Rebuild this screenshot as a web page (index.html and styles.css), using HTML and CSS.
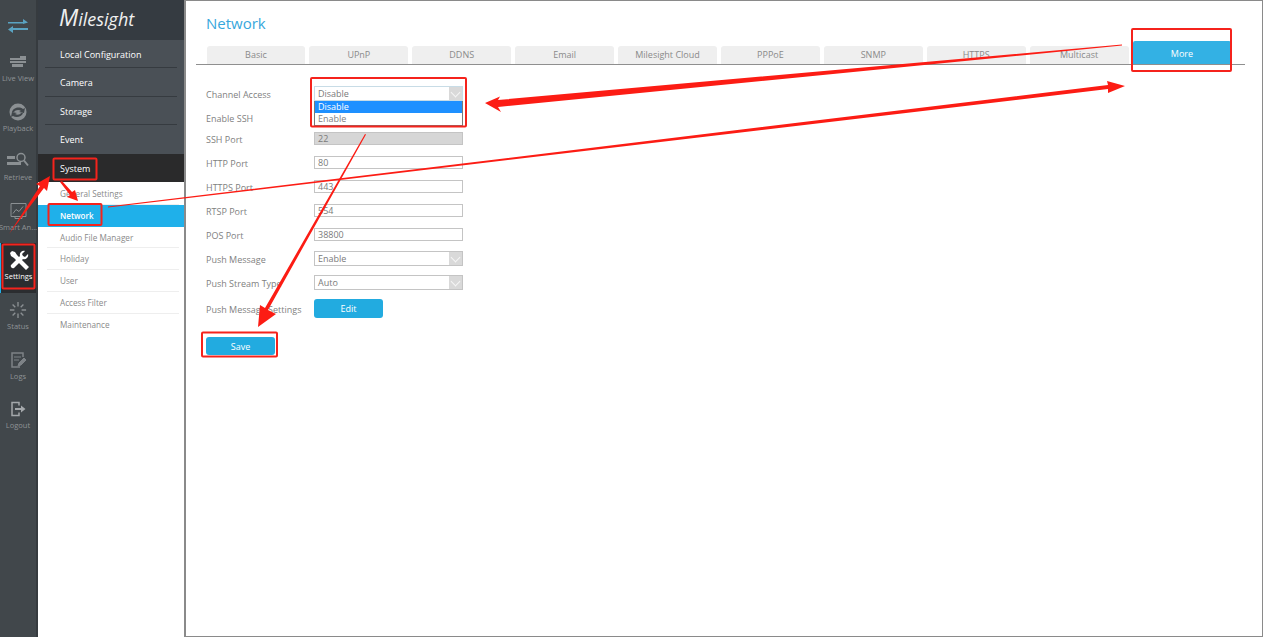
FILE: index.html
```html
<!DOCTYPE html>
<html lang="en">
<head>
    <meta charset="UTF-8">
    <title>Network</title>
    <link rel="stylesheet" href="styles.css">
</head>
<body>

<div class="app">
    <div class="rail">
        <div class="rail-top">
            <svg width="22" height="14" viewBox="0 0 22 14" fill="#5aa3c2"><path d="M1 3h15V0l5 3.500-5 1.500V4.500H1zM21 9H6V7L1 10.500 6 14v-3h15z"/></svg>
        </div>
        <div class="rail-item">
            <svg width="18" height="14" viewBox="0 0 18 14" fill="#8b9093"><path d="M1 3h10V1h6v4H1zM1 6h16v2H1zM3 9h11v3H3z"/></svg>
            <span>Live View</span>
        </div>
        <div class="rail-item">
            <svg width="18" height="18" viewBox="0 0 18 18"><circle cx="9" cy="9" r="8.500" fill="#8b9093"/><path d="M3 9c1-4 7-6 11-3l2-1-1 5-5-1 2-1c-2-2-6-1-7 1zM14 10c-1 4-7 5-10 3l-2 1 1-5 5 1-2 1c2 1 5 1 6-1z" fill="#41474b"/></svg>
            <span>Playback</span>
        </div>
        <div class="rail-item">
            <svg width="24" height="17" viewBox="0 0 24 17" fill="none" stroke="#8b9093"><path d="M1 5h8M1 11h14" stroke-width="3"/><circle cx="15" cy="5" r="4" stroke-width="1.500"/><path d="M18 8l4 5" stroke-width="2"/></svg>
            <span>Retrieve</span>
        </div>
        <div class="rail-item">
            <svg width="17" height="17" viewBox="0 0 17 17" fill="none" stroke="#8b9093"><path d="M1 1h15v13H1zM5 14v2h7v-2"/><path d="M3 11l3-4 3 2 4-5" stroke-width="1"/></svg>
            <span>Smart An...</span>
        </div>
        <div class="rail-item active">
            <svg width="20" height="20" viewBox="0 0 20 20" fill="#fff"><path d="M1 3l2-2 3 1 2 3 12 12-3 3L5 8 2 6z"/><path d="M19 4l-3 3-2-1-1-2 3-3c-3-1-6 2-5 5L2 15c-1 2 1 4 3 3l9-9c3 1 6-2 5-5z"/></svg>
            <span>Settings</span>
        </div>
        <div class="rail-item">
            <svg width="18" height="18" viewBox="0 0 20 20" stroke="#8b9093" stroke-width="1.500"><path d="M10 1v5M10 14v5M1 10h5M14 10h5M4 4l3 3M13 13l3 3M16 4l-3 3M7 13l-3 3"/></svg>
            <span>Status</span>
        </div>
        <div class="rail-item">
            <svg width="15" height="16" viewBox="0 0 15 16" fill="none" stroke="#7d8286"><path d="M12 5V1H1v14h8" stroke-width="1.500"/><path d="M3 5h7M3 8h5" stroke-width="1"/><path d="M7 14l1-3 5-5 2 2-5 5z" fill="#7d8286"/></svg>
            <span>Logs</span>
        </div>
        <div class="rail-item">
            <svg width="15" height="15" viewBox="0 0 15 15" fill="none" stroke="#a4a8ab"><path d="M8 4V1H1v13h7v-3" stroke-width="1.500"/><path d="M4 6.500h6V4l4.500 3.500L10 11V8.500H4z" fill="#a4a8ab" stroke="none"/></svg>
            <span>Logout</span>
        </div>
    </div>

    <div class="menu">
        <div class="logo"><span class="logo-m">M</span>ilesight</div>
        <ul class="menu-main">
            <li>Local Configuration</li>
            <li>Camera</li>
            <li>Storage</li>
            <li>Event</li>
            <li class="open">System</li>
        </ul>
        <ul class="menu-sub">
            <li>General Settings</li>
            <li class="current">Network</li>
            <li>Audio File Manager</li>
            <li>Holiday</li>
            <li>User</li>
            <li>Access Filter</li>
            <li>Maintenance</li>
        </ul>
    </div>

    <div class="main">
        <h1>Network</h1>
        <div class="tabs">
            <div class="tab">Basic</div>
            <div class="tab">UPnP</div>
            <div class="tab">DDNS</div>
            <div class="tab">Email</div>
            <div class="tab">Milesight Cloud</div>
            <div class="tab">PPPoE</div>
            <div class="tab">SNMP</div>
            <div class="tab">HTTPS</div>
            <div class="tab">Multicast</div>
            <div class="tab tab-more">More</div>
        </div>

        <div class="form">
            <div class="row">
                <label>Channel Access</label>
                <div class="select open"><span>Disable</span><i></i></div>
                <ul class="dropdown">
                    <li class="picked">Disable</li>
                    <li>Enable</li>
                </ul>
            </div>
            <div class="row">
                <label>Enable SSH</label>
                <div class="select"><span>Enable</span><i></i></div>
            </div>
            <div class="row row-up">
                <label>SSH Port</label>
                <div class="input disabled">22</div>
            </div>
            <div class="row">
                <label>HTTP Port</label>
                <div class="input">80</div>
            </div>
            <div class="row">
                <label>HTTPS Port</label>
                <div class="input">443</div>
            </div>
            <div class="row">
                <label>RTSP Port</label>
                <div class="input">554</div>
            </div>
            <div class="row">
                <label>POS Port</label>
                <div class="input">38800</div>
            </div>
            <div class="row">
                <label>Push Message</label>
                <div class="select"><span>Enable</span><i></i></div>
            </div>
            <div class="row">
                <label>Push Stream Type</label>
                <div class="select"><span>Auto</span><i></i></div>
            </div>
            <div class="row row-down">
                <label>Push Message Settings</label>
                <button class="btn">Edit</button>
            </div>
            <button class="btn btn-save">Save</button>
        </div>
    </div>
</div>

<!-- red markup drawn on top of the screenshot -->
<svg class="markup" width="1267" height="640" viewBox="0 0 1267 640" fill="#fc1c14">
    <g fill="none" stroke="#f5231c" stroke-width="2">
        <rect x="53.500" y="158.500" width="43" height="21" rx="1"/>
        <rect x="48.500" y="204" width="53" height="21" rx="1"/>
        <rect x="2.500" y="244.500" width="32" height="44" rx="1"/>
        <rect x="311" y="78" width="155" height="48.500" rx="1"/>
        <rect x="1132" y="29" width="99" height="42" rx="1"/>
        <rect x="202" y="332.500" width="75" height="24" rx="1"/>
    </g>
    <path d="M1122 44.500L1122 45.500L498 107L501 112L485 103L500 96.500L498 100z"/>
    <path d="M108 206.500L1108 85L1107 81L1125 86L1108 93L1108 89L108 207.500z"/>
    <path d="M365 134L366 134.500L268 310L276 314L258 327L260 305L265 308z"/>
    <path d="M9 234L40 186L36 184L50 176L47 191L44 188z"/>
    <path d="M60 182L62 181L72 192L75 190L78 201L67 197L70 195z"/>
</svg>

</body>
</html>
```

FILE: styles.css
```css
* {
    box-sizing: border-box;
}
body {
    margin: 0;
    background-color: white;
    font-family: "Open Sans", "Noto Sans", Arial, sans-serif;
    font-size: 9px;
    overflow: hidden;
}
ul {
    list-style: none;
    margin: 0;
    padding: 0;
}
.app {
    display: flex;
    width: 1263px;
    height: 637px;
}

/* left icon rail */
.rail {
    width: 38px;
    flex-shrink: 0;
    background-color: #41474b;
    border-right: 2px solid #363b3f;
    color: #8f9396;
}
.rail-top {
    height: 45px;
    padding-top: 19px;
    display: flex;
    justify-content: center;
    align-items: flex-start;
}
.rail-item {
    height: 49.6px;
    display: flex;
    flex-direction: column;
    align-items: center;
    text-align: center;
    white-space: nowrap;
    font-size: 7.500px;
    color: #8f9396;
}
.rail-item svg {
    display: block;
    height: 20px;
    margin-top: 7px;
    margin-bottom: 1px;
}
.rail-item.active {
    background-color: #2b2d30;
    border-left: 1px solid #1fb0ea;
    color: white;
}

/* second level menu */
.menu {
    width: 147px;
    flex-shrink: 0;
    border-right: 1px solid #8a8a8a;
}
.logo {
    height: 40px;
    padding: 3px 0 0 21px;
    background-color: #353b41;
    color: #f0f0f0;
    font-size: 18px;
    line-height: 28px;
    font-weight: 400;
    font-style: italic;
}
.logo-m {
    font-size: 23px;
}
.menu-main {
    background-color: #4a5056;
}
.menu-main li {
    height: 28.400px;
    margin: 0 7px;
    padding-left: 15px;
    line-height: 29px;
    font-size: 9px;
    color: white;
    border-bottom: 1px solid #363b40;
}
.menu-main li:nth-child(4) {
    border-bottom: none;
}
.menu-main li.open {
    margin: 0;
    padding-left: 22px;
    background-color: #2a2a2b;
    border-bottom: none;
}
.menu-sub {
    padding-top: 1px;
}
.menu-sub li {
    height: 21.800px;
    margin: 0 5px 0 9px;
    padding-left: 13px;
    line-height: 22px;
    font-size: 8.200px;
    color: #8a8a8a;
    border-bottom: 1px solid #eeeeee;
}
.menu-sub li.current {
    margin: 0;
    padding-left: 22px;
    background-color: #1fb0ea;
    color: white;
    font-weight: 600;
    font-size: 8px;
    border-bottom: none;
}
.menu-sub li:last-child {
    border-bottom: none;
}

/* content */
.main {
    flex: 1;
    border: 1px solid #8a8a8a;
    padding-left: 10px;
}
h1 {
    margin: 0;
    padding: 12px 0 0 10px;
    height: 40px;
    font-size: 15px;
    line-height: 20px;
    font-weight: 400;
    color: #37a7dc;
}
.tabs {
    width: 1049px;
    height: 24px;
    padding-left: 10.500px;
    display: flex;
    align-items: flex-end;
    gap: 4px;
    border-bottom: 1px solid #8f8f8f;
}
.tab {
    width: 98.900px;
    height: 18px;
    background-color: #efefef;
    border-radius: 3px 3px 0 0;
    text-align: center;
    line-height: 18px;
    font-size: 9px;
    color: #8a8a8a;
}
.tab-more {
    height: 23px;
    border-radius: 2px 2px 0 0;
    padding-top: 4px;
    background-color: #33b1e4;
    color: white;
}
.form {
    padding: 16px 0 0 10px;
}
.row {
    position: relative;
    height: 24px;
    display: flex;
    align-items: center;
    font-size: 9px;
    color: #7f7f7f;
}
.row label {
    width: 108px;
    padding-top: 2px;
    white-space: nowrap;
}
.row-up {
    margin-top: -3px;
}
.row-down {
    margin-top: 2px;
}
.input, .select {
    width: 149px;
    height: 13px;
    padding-left: 3px;
    border: 1px solid #c4c4c4;
    background-color: white;
    line-height: 11px;
    font-size: 9px;
    color: #7a7a7a;
}
.input.disabled {
    background-color: #d6d6d6;
}
.select {
    height: 15px;
    display: flex;
    justify-content: space-between;
    line-height: 13px;
}
.select i {
    width: 13px;
    height: 13px;
    background-color: #d9d9d9;
    position: relative;
}
.select i::after {
    content: "";
    position: absolute;
    left: 3px;
    top: 2px;
    width: 6px;
    height: 6px;
    border-right: 1px solid #f5f5f5;
    border-bottom: 1px solid #f5f5f5;
    transform: rotate(45deg);
}
.select.open {
    border-color: #c8dce6;
}
.dropdown {
    position: absolute;
    left: 108px;
    top: 20px;
    width: 149px;
    border: 1px solid #7a7a7a;
    border-top: none;
    background-color: white;
    z-index: 2;
}
.dropdown li {
    height: 12px;
    line-height: 12px;
    padding-left: 3px;
}
.dropdown .picked {
    background-color: #1e90ff;
    color: white;
}
.btn {
    display: block;
    width: 69px;
    height: 19px;
    padding: 0;
    border: none;
    border-radius: 3px;
    background-color: #22abe0;
    color: white;
    font-family: inherit;
    font-size: 9px;
}
.btn-save {
    height: 18px;
    margin-top: 17px;
}

/* annotations */
.markup {
    position: absolute;
    left: 0;
    top: 0;
    z-index: 5;
}
```
